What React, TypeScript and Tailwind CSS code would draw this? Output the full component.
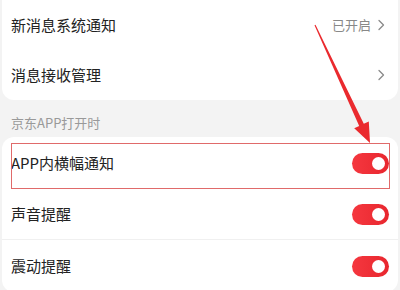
import React from 'react'

const font = { fontFamily: '"Noto Sans CJK SC", "Noto Sans", sans-serif' }

function Chevron() {
  return (
    <svg width="8" height="12" viewBox="0 0 8 12" className="ml-[6px]">
      <path d="M2 1.5 L6.5 6 L2 10.5" fill="none" stroke="#8a8a8a" strokeWidth="1.3" strokeLinecap="round" strokeLinejoin="round" />
    </svg>
  )
}

function Toggle() {
  return (
    <div className="w-[37px] h-[21px] rounded-full bg-gradient-to-r from-[#f5373f] to-[#e8262e] flex items-center justify-end pr-[4px]">
      <div className="w-[13px] h-[13px] rounded-full bg-white" />
    </div>
  )
}

type RowProps = {
  label: string,
  value?: string,
  toggle?: boolean,
  className?: string,
  children?: React.ReactNode
}

function Row({ label, value, toggle, className, children }: RowProps) {
  return (
    <div className={`relative flex items-center justify-between px-[9px] ${className ?? ''}`}>
      <span className="text-[15px] text-[#222]">{label}</span>
      {toggle ? (
        <Toggle />
      ) : (
        <div className="flex items-center mr-[4px]">
          {value && <span className="text-[13px] text-[#888]">{value}</span>}
          <Chevron />
        </div>
      )}
      {children}
    </div>
  )
}

export default function App() {
  return (
    <div className="relative w-[400px] h-[290px] overflow-hidden bg-[#f3f3f3]" style={font}>
      <div className="mx-[2px] bg-white rounded-b-xl">
        <Row label="新消息系统通知" value="已开启" className="h-[50px]" />
        <Row label="消息接收管理" className="h-[50px]" />
      </div>

      <div className="h-[37px] px-[11px] pt-[13px] text-[13px] leading-[20px] text-[#999]">京东APP打开时</div>

      <div className="mx-[2px] bg-white rounded-xl">
        <Row label="APP内横幅通知" toggle className="h-[52px]">
          <div className="absolute left-[9px] right-[8px] top-[6px] bottom-0 border-[1.5px] border-[#e06a6a]" />
        </Row>
        <Row label="声音提醒" toggle className="h-[51px] border-b border-[#f0f0f0]" />
        <Row label="震动提醒" toggle className="h-[52px]" />
      </div>

      <svg className="absolute inset-0 pointer-events-none" width="400" height="290" viewBox="0 0 400 290">
        <polygon
          points="314.5,25.2 315.5,24.8 363.8,123.7 368.8,121.4 370,143 354.2,128.2 359.2,125.9"
          fill="#ea2a2e"
        />
      </svg>
    </div>
  )
}
